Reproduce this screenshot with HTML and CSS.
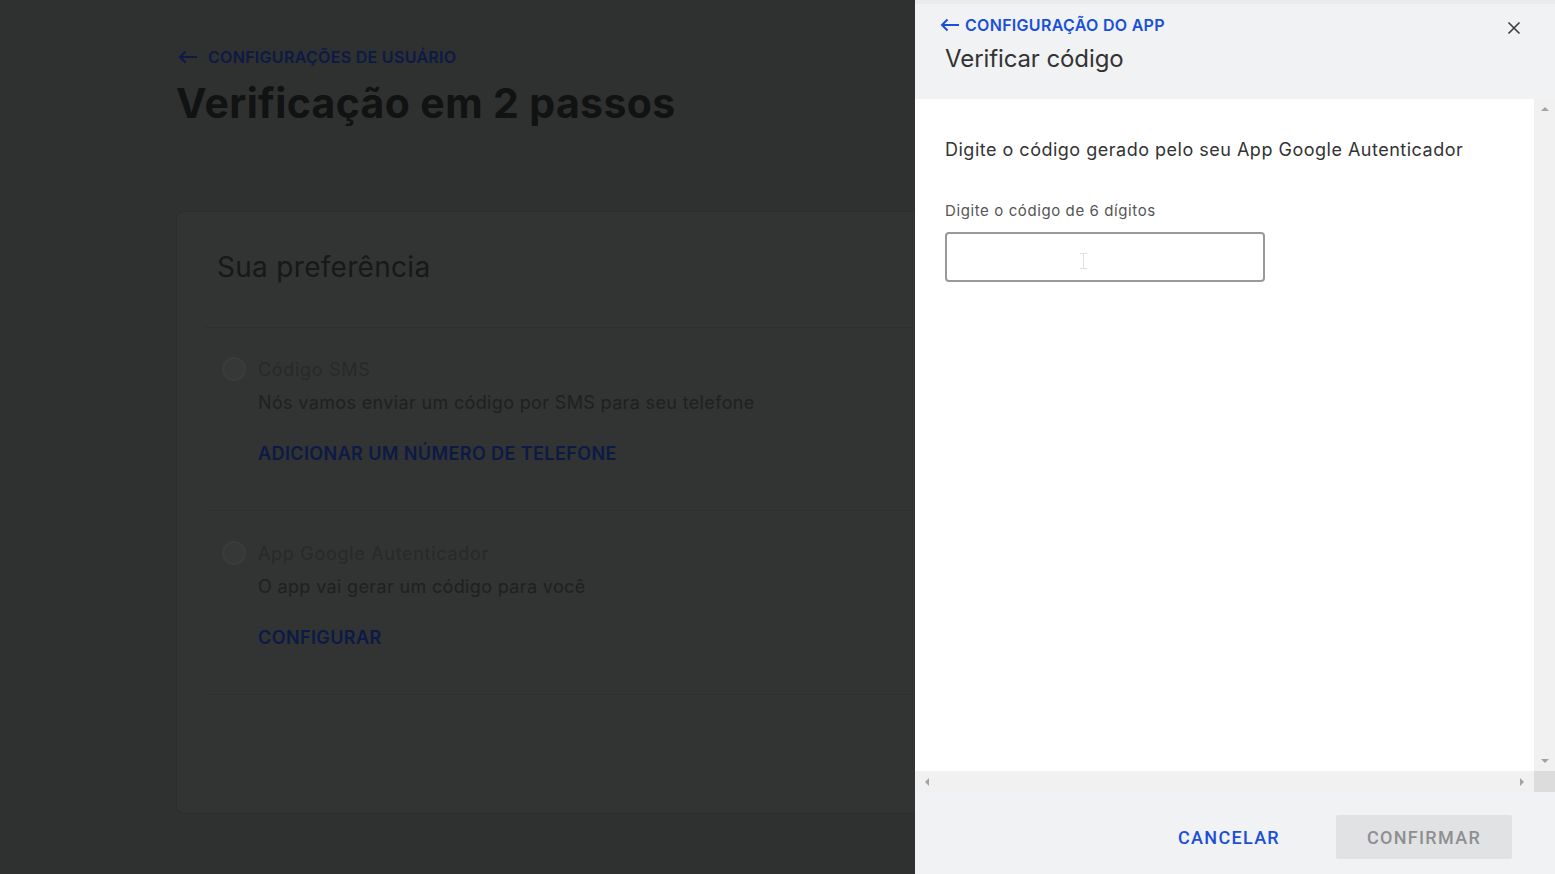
FILE: index.html
```html
<!DOCTYPE html>
<html lang="pt-BR">
<head>
<meta charset="utf-8">
<title>Verificação em 2 passos</title>
<link rel="stylesheet" href="styles.css">
</head>
<body>
<main class="page">
  <a class="crumb">
    <svg class="crumb-arrow" width="20" height="14" viewBox="0 0 20 14"><path d="M19 7H2M7.5 1.5L2 7l5.5 5.5" fill="none" stroke="currentColor" stroke-width="2"/></svg>
    <span>CONFIGURAÇÕES DE USUÁRIO</span>
  </a>
  <h1 class="page-title">Verificação em 2 passos</h1>
  <section class="card">
    <h2 class="card-title">Sua preferência</h2>
    <div class="option">
      <div class="option-head"><span class="radio"></span><span class="option-name">Código SMS</span></div>
      <p class="option-desc">Nós vamos enviar um código por SMS para seu telefone</p>
      <a class="option-link">ADICIONAR UM NÚMERO DE TELEFONE</a>
    </div>
    <div class="option">
      <div class="option-head"><span class="radio"></span><span class="option-name">App Google Autenticador</span></div>
      <p class="option-desc">O app vai gerar um código para você</p>
      <a class="option-link">CONFIGURAR</a>
    </div>
  </section>
</main>
<aside class="drawer">
  <header class="drawer-head">
    <div class="head-main">
      <a class="back">
        <svg class="back-arrow" width="20" height="14" viewBox="0 0 20 14"><path d="M19 7H2M7.5 1.5L2 7l5.5 5.5" fill="none" stroke="currentColor" stroke-width="2"/></svg>
        <span>CONFIGURAÇÃO DO APP</span>
      </a>
      <h2 class="drawer-title">Verificar código</h2>
    </div>
    <button class="close" aria-label="Fechar">
      <svg width="14" height="14" viewBox="0 0 14 14"><path d="M1.5 1.5l11 11M12.5 1.5l-11 11" stroke="#3c3c3c" stroke-width="1.6" fill="none"/></svg>
    </button>
  </header>
  <div class="drawer-scroll">
    <div class="scroll-row">
      <div class="drawer-body">
        <p class="intro">Digite o código gerado pelo seu App Google Autenticador</p>
        <label class="field-label">Digite o código de 6 dígitos</label>
        <div class="code-input"><span class="ibeam"></span></div>
      </div>
      <div class="vbar">
        <span class="tri tri-up"></span>
        <span class="tri tri-down"></span>
      </div>
    </div>
    <div class="hbar-row">
      <div class="hbar">
        <span class="tri tri-left"></span>
        <span class="tri tri-right"></span>
      </div>
      <div class="corner"></div>
    </div>
  </div>
  <footer class="drawer-foot">
    <button class="btn-cancel">CANCELAR</button>
    <button class="btn-confirm">CONFIRMAR</button>
  </footer>
</aside>
</body>
</html>
```
FILE: styles.css
```css
* { box-sizing: border-box; }
html, body { margin: 0; padding: 0; }
body {
  width: 1555px;
  height: 874px;
  overflow: hidden;
  display: flex;
  background: #2f3030;
  font-family: Inter, "Noto Sans", Roboto, sans-serif;
}
.page {
  flex: 1;
  min-width: 0;
  overflow: hidden;
  padding: 47px 0 0 176px;
}
.crumb {
  display: flex;
  align-items: center;
  gap: 10px;
  height: 20px;
  color: #0c1a45;
  font-size: 16px;
  font-weight: 600;
  letter-spacing: 0.3px;
  margin-left: 2px;
}
.page-title {
  margin: 12px 0 0;
  font-size: 41px;
  line-height: 48px;
  font-weight: 700;
  color: #111212;
  letter-spacing: 0.37px;
}
.card {
  margin-top: 84px;
  width: 1000px;
  height: 603px;
  background: #323333;
  border: 1px solid #2c2d2d;
  border-radius: 8px;
  padding: 37px 0 0 27px;
}
.card-title {
  margin: 0 0 42px 13px;
  font-size: 28px;
  line-height: 36px;
  font-weight: 400;
  color: #171818;
  letter-spacing: 0.3px;
}
.option {
  border-top: 1px solid #2e2f2f;
  padding: 29px 0 44px 18px;
}
.option + .option { padding-top: 30px; }
.option:last-child { border-bottom: 1px solid #2e2f2f; }
.option-head {
  display: flex;
  align-items: center;
  gap: 12px;
  height: 24px;
}
.radio {
  width: 24px;
  height: 24px;
  border-radius: 50%;
  background: #363838;
  border: 2px solid #3a3c3c;
}
.option-name {
  font-size: 18px;
  color: #282929;
  letter-spacing: 0.7px;
}
.option-desc {
  margin: 10px 0 0 36px;
  font-size: 18px;
  line-height: 24px;
  color: #1f2020;
  letter-spacing: 0.35px;
}
.option-link {
  display: block;
  margin: 27px 0 0 36px;
  font-size: 18px;
  line-height: 24px;
  font-weight: 600;
  color: #0c1a45;
  letter-spacing: 0.4px;
}

/* Drawer */
.drawer {
  width: 640px;
  flex: none;
  display: flex;
  flex-direction: column;
  background: #f1f2f4;
  border-top: 4px solid #eaebed;
}
.drawer-head {
  height: 95px;
  display: flex;
  justify-content: space-between;
  padding: 11px 0 0 25px;
}
.back {
  display: flex;
  align-items: center;
  gap: 5px;
  height: 20px;
  color: #1a4fd8;
  font-size: 16px;
  font-weight: 600;
  letter-spacing: 0.3px;
}
.drawer-title {
  margin: 8px 0 0 5px;
  font-size: 24px;
  line-height: 32px;
  font-weight: 400;
  color: #333;
  letter-spacing: -0.1px;
}
.close {
  border: 0;
  background: none;
  padding: 0;
  width: 14px;
  height: 14px;
  margin: 6px 34px 0 0;
  display: flex;
}
.drawer-scroll {
  height: 693px;
  display: flex;
  flex-direction: column;
  background: #fff;
}
.scroll-row {
  flex: 1;
  display: flex;
}
.drawer-body {
  flex: 1;
  padding: 39px 0 0 30px;
}
.intro {
  margin: 0;
  font-size: 18px;
  line-height: 24px;
  color: #333;
  letter-spacing: 0.5px;
}
.field-label {
  display: block;
  margin-top: 39px;
  font-size: 15px;
  line-height: 20px;
  color: #555;
  letter-spacing: 0.6px;
}
.code-input {
  margin-top: 11px;
  width: 320px;
  height: 50px;
  border: 2px solid #999;
  border-radius: 4px;
  display: flex;
  align-items: center;
  padding-left: 133px;
  background: #fff;
}
.ibeam {
  width: 7px;
  height: 16px;
  margin-top: 8px;
  border-top: 1px solid #e0e0e0;
  border-bottom: 1px solid #e0e0e0;
  background: linear-gradient(#e0e0e0, #e0e0e0) center / 1px 100% no-repeat;
}
.vbar {
  width: 21px;
  background: #f1f1f1;
  display: flex;
  flex-direction: column;
  justify-content: space-between;
  align-items: center;
  padding: 8px 0;
}
.hbar-row {
  height: 21px;
  display: flex;
}
.hbar {
  flex: 1;
  background: #f1f1f1;
  display: flex;
  justify-content: space-between;
  align-items: center;
  padding: 0 8px;
}
.corner {
  width: 21px;
  background: #dcdcdc;
}
.tri { width: 0; height: 0; display: block; }
.tri-up { border-left: 4px solid transparent; border-right: 4px solid transparent; border-bottom: 4px solid #a3a3a3; }
.tri-down { border-left: 4px solid transparent; border-right: 4px solid transparent; border-top: 4px solid #a3a3a3; }
.tri-left { border-top: 4px solid transparent; border-bottom: 4px solid transparent; border-right: 4px solid #a3a3a3; margin-left: 2px; }
.tri-right { border-top: 4px solid transparent; border-bottom: 4px solid transparent; border-left: 4px solid #a3a3a3; margin-right: 2px; }
.drawer-foot {
  flex: 1;
  display: flex;
  justify-content: flex-end;
  align-items: flex-start;
  padding: 23px 43px 0 0;
  gap: 56px;
}
.drawer-foot button {
  font-family: Roboto, Inter, sans-serif;
  font-size: 18px;
  font-weight: 500;
  border: 0;
  height: 44px;
  padding: 0;
  letter-spacing: 1.3px;
}
.btn-cancel {
  background: none;
  color: #1a4fd8;
}
.btn-confirm {
  width: 176px;
  background: #e1e2e4;
  color: #8e8f90;
  border-radius: 2px;
}
```
